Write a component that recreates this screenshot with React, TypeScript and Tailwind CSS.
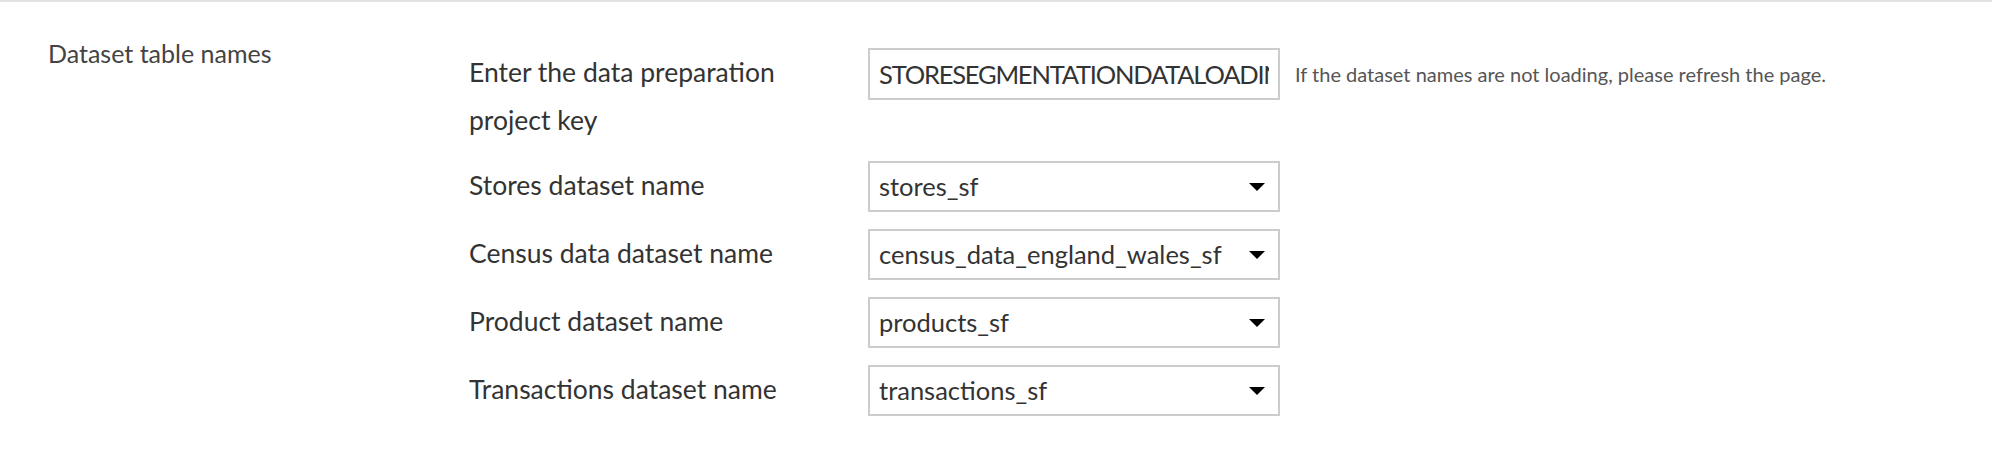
const font = { fontFamily: "Lato, 'Open Sans', sans-serif" };

const selects = [
  { label: "Stores dataset name", value: "stores_sf" },
  { label: "Census data dataset name", value: "census_data_england_wales_sf" },
  { label: "Product dataset name", value: "products_sf" },
  { label: "Transactions dataset name", value: "transactions_sf" },
];

const Caret = () => (
  <span className="h-0 w-0 border-x-8 border-t-8 border-x-transparent border-t-black" />
);

const App = () => {
  return (
    <div style={font} className="h-[464px] w-full border-t-2 border-[#e2e2e2] bg-white text-[#333]">
      <div className="flex pt-[46px]">
        {/* section title */}
        <div className="w-[469px] shrink-0 pl-[48px] -mt-[19px] text-[25px] leading-[48px] text-[#444]">
          Dataset table names
        </div>

        <div className="flex flex-col gap-[17px]">
          <div className="flex items-start">
            <div className="w-[399px] shrink-0 text-[26.5px] leading-[48px]">
              Enter the data preparation
              <br />
              project key
            </div>
            <div className="flex h-[52px] w-[412px] shrink-0 items-center border-2 border-[#cccccc] px-[9px]">
              <div className="flex-1 overflow-hidden whitespace-nowrap text-[25.5px] tracking-[-1.2px] text-[#333]">
                STORESEGMENTATIONDATALOADING
              </div>
            </div>
            <div className="ml-[15px] flex h-[52px] items-center text-[20px] text-[#555]">
              If the dataset names are not loading, please refresh the page.
            </div>
          </div>

          {selects.map((s) => (
            <div key={s.label} className="flex items-start">
              <div className="w-[399px] shrink-0 text-[26.5px] leading-[48px]">{s.label}</div>
              <div className="flex h-[51px] w-[412px] shrink-0 items-center justify-between border-2 border-[#cccccc] pl-[9px] pr-[13px] text-[25.5px]">
                <span className="whitespace-nowrap">{s.value}</span>
                <Caret />
              </div>
            </div>
          ))}
        </div>
      </div>
    </div>
  );
};

export default App;
